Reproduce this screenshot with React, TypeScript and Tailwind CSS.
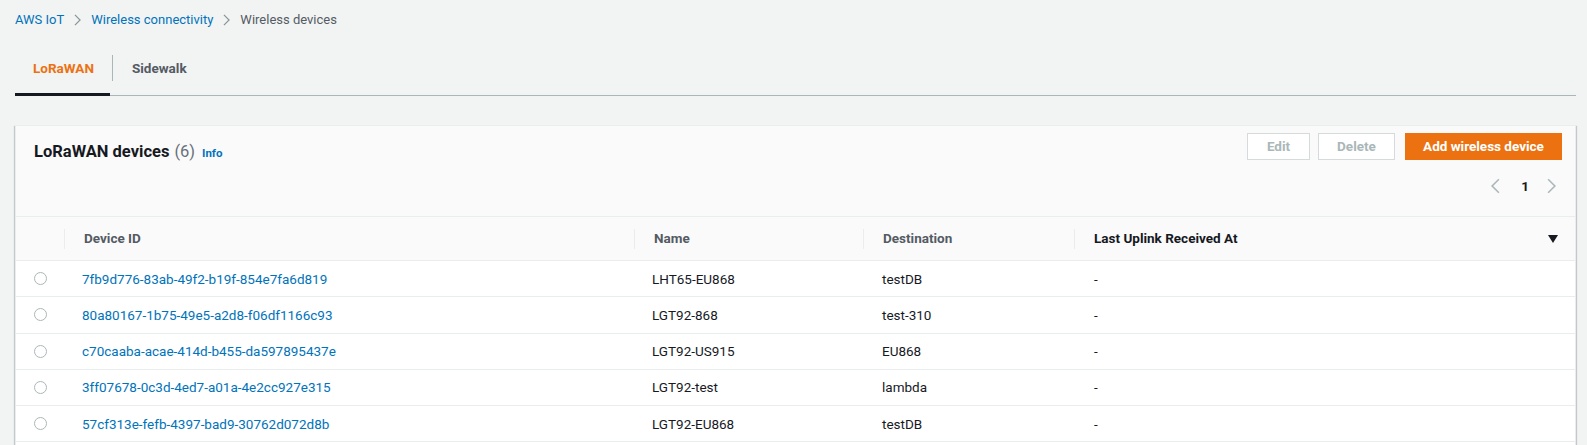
import React from "react";

interface Device {
  id: string;
  name: string;
  destination: string;
  lastUplink: string;
}

const devices: Device[] = [
  { id: "7fb9d776-83ab-49f2-b19f-854e7fa6d819", name: "LHT65-EU868", destination: "testDB", lastUplink: "-" },
  { id: "80a80167-1b75-49e5-a2d8-f06df1166c93", name: "LGT92-868", destination: "test-310", lastUplink: "-" },
  { id: "c70caaba-acae-414d-b455-da597895437e", name: "LGT92-US915", destination: "EU868", lastUplink: "-" },
  { id: "3ff07678-0c3d-4ed7-a01a-4e2cc927e315", name: "LGT92-test", destination: "lambda", lastUplink: "-" },
  { id: "57cf313e-fefb-4397-bad9-30762d072d8b", name: "LGT92-EU868", destination: "testDB", lastUplink: "-" },
];

const Chevron = ({ dir = "right", className = "" }: { dir?: "left" | "right"; className?: string }) => (
  <svg viewBox="0 0 8 14" className={className} fill="none" stroke="currentColor" strokeWidth="1.4">
    {dir === "right" ? <path d="M1 1l6 6-6 6" /> : <path d="M7 1L1 7l6 6" />}
  </svg>
);

const cols = "grid grid-cols-[48px_570px_229px_211px_1fr]";

const App: React.FC = () => {
  return (
    <div className="min-h-screen bg-[#f2f3f3] font-['Roboto','Liberation_Sans',sans-serif] text-[#16191f] pl-[15px] pr-[11px]">
      {/* breadcrumb */}
      <div className="h-[40px] flex items-center text-[13px]">
        <span className="text-[#0073bb]">AWS IoT</span>
        <Chevron className="w-[7px] h-[12px] mx-[10px] text-[#879596]" />
        <span className="text-[#0073bb]">Wireless connectivity</span>
        <Chevron className="w-[7px] h-[12px] mx-[10px] text-[#879596]" />
        <span className="text-[#545b64]">Wireless devices</span>
      </div>

      {/* tabs */}
      <div className="flex h-[56px] border-b border-[#aab7b8]">
        <div className="relative flex items-center px-[18px] pt-[2px] text-[13.5px] font-bold text-[#ec7211]">
          LoRaWAN
          <div className="absolute left-0 right-[2px] -bottom-[1px] h-[3px] bg-[#16191f]" />
        </div>
        <div className="flex items-center">
          <div className="w-px h-[26px] bg-[#aab7b8]" />
        </div>
        <div className="flex items-center px-[19px] pt-[2px] text-[13.5px] font-bold text-[#545b64]">Sidewalk</div>
      </div>

      {/* card */}
      <div className="mt-[29px] bg-white border border-[#eaeded] shadow-[0_1px_1px_0_rgba(0,28,36,0.3),1px_1px_1px_0_rgba(0,28,36,0.15),-1px_1px_1px_0_rgba(0,28,36,0.15)]">
        <div className="bg-[#fafafa] h-[90px] pl-[18px] pr-[13px] pt-[7px]">
          <div className="flex justify-between items-start">
            <div className="pt-[7px] flex items-baseline">
              <span className="text-[16.5px] font-bold text-[#16191f]">LoRaWAN devices</span>
              <span className="text-[16.5px] text-[#687078] ml-[5px]">(6)</span>
              <span className="text-[11.5px] font-bold text-[#0073bb] ml-[7px]">Info</span>
            </div>
            <div className="flex gap-[8px]">
              <button className="h-[27px] w-[63px] bg-white border border-[#d5dbdb] text-[13.5px] font-bold text-[#aab7b8]">Edit</button>
              <button className="h-[27px] w-[77px] bg-white border border-[#d5dbdb] text-[13.5px] font-bold text-[#aab7b8]">Delete</button>
              <button className="h-[27px] w-[157px] ml-[2px] bg-[#ec7211] border border-[#ec7211] text-[13.5px] font-bold text-white">Add wireless device</button>
            </div>
          </div>
          <div className="flex justify-end items-center mt-[10px] h-[22px] pr-[6px]">
            <Chevron dir="left" className="w-[9px] h-[16px] text-[#aab7b8]" />
            <span className="text-[13.5px] font-bold ml-[21px] mr-[18px]">1</span>
            <Chevron className="w-[9px] h-[16px] text-[#aab7b8]" />
          </div>
        </div>

        {/* table header */}
        <div className={`${cols} h-[45px] bg-[#fafafa] border-t border-b border-[#eaeded] text-[13.5px] font-bold`}>
          <div />
          {["Device ID", "Name", "Destination"].map((h) => (
            <div key={h} className="flex items-center">
              <div className="w-px h-[20px] bg-[#eaeded]" />
              <span className="pl-[19px] text-[#545b64]">{h}</span>
            </div>
          ))}
          <div className="flex items-center pr-[17px]">
            <div className="w-px h-[20px] bg-[#eaeded]" />
            <span className="pl-[19px] text-[#16191f] flex-1">Last Uplink Received At</span>
            <svg viewBox="0 0 10 8" className="w-[10px] h-[8px]">
              <path d="M0 0h10L5 8z" fill="#16191f" />
            </svg>
          </div>
        </div>

        {/* rows */}
        {devices.map((d) => (
          <div key={d.id} className={`${cols} h-[36.3px] border-b border-[#eaeded] text-[13.5px] items-center`}>
            <div className="flex justify-center">
              <div className="w-[13px] h-[13px] rounded-full border border-[#aab7b8] bg-white" />
            </div>
            <div className="pl-[18px] text-[#0073bb]">{d.id}</div>
            <div className="pl-[18px]">{d.name}</div>
            <div className="pl-[19px]">{d.destination}</div>
            <div className="pl-[20px]">{d.lastUplink}</div>
          </div>
        ))}
        <div className="h-[36px]" />
      </div>
    </div>
  );
};

export default App;
